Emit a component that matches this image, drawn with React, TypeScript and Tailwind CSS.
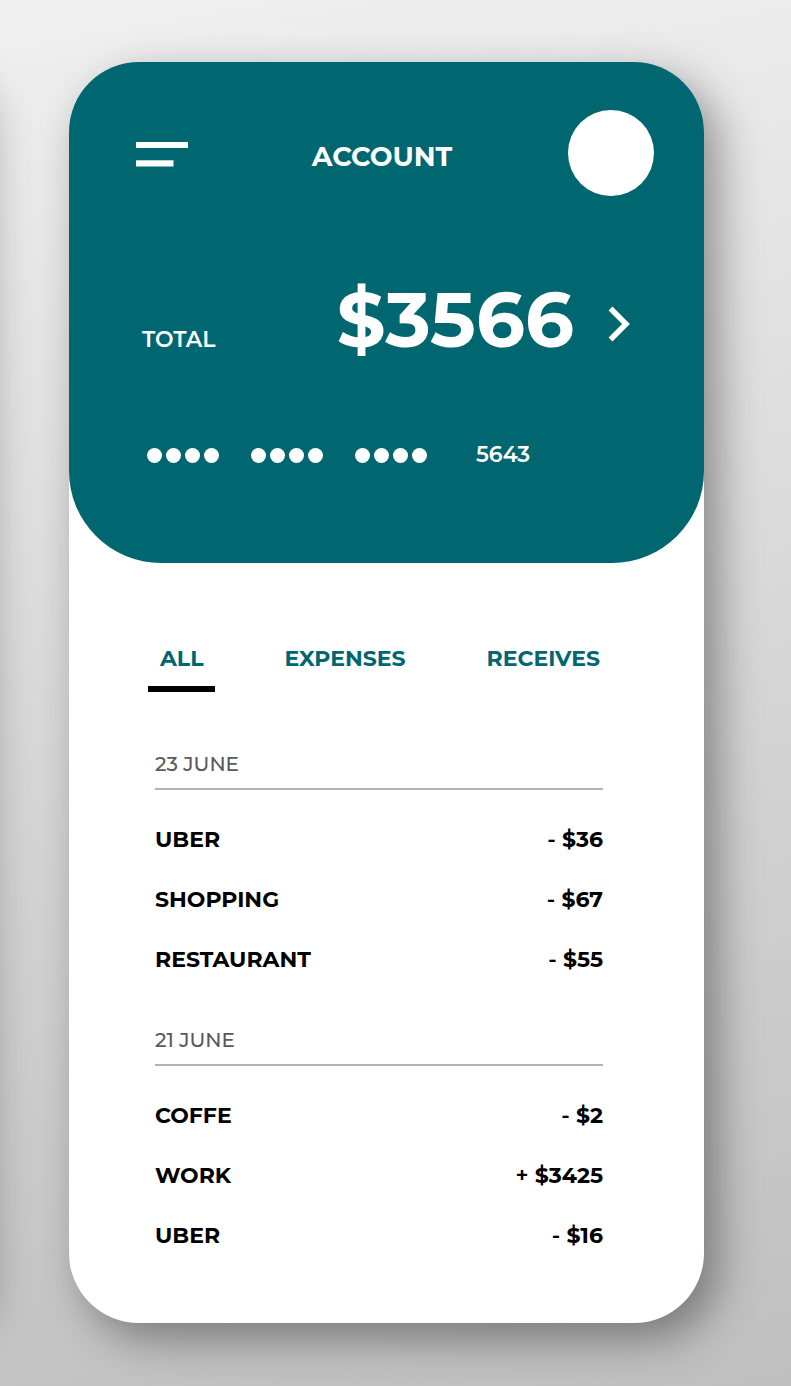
const groups = [
  {
    date: "23 JUNE",
    rows: [
      ["UBER", "-", "$36"],
      ["SHOPPING", "-", "$67"],
      ["RESTAURANT", "-", "$55"],
    ],
  },
  {
    date: "21 JUNE",
    rows: [
      ["COFFE", "-", "$2"],
      ["WORK", "+", "$3425"],
      ["UBER", "-", "$16"],
    ],
  },
];

const tabs = ["ALL", "EXPENSES", "RECEIVES"];

function MaskedDigits() {
  return (
    <span className="flex gap-1" aria-hidden="true">
      {[0, 1, 2, 3].map((i) => (
        <span key={i} className="size-[15px] rounded-full bg-white" />
      ))}
    </span>
  );
}

function AccountHeader() {
  return (
    <header className="rounded-t-[70px] rounded-b-[92px] bg-[#006670] pt-12 pr-[50px] pb-[92px] pl-[67px] text-white">
      <div className="flex items-center justify-between">
        <button type="button" aria-label="Menu" className="w-[60px] pt-0.5">
          <svg width="52" height="25" viewBox="0 0 52 25" fill="currentColor" className="block">
            <rect width="52" height="6" />
            <rect y="18.3" width="37.5" height="6.2" />
          </svg>
        </button>
        <h1 className="pt-2 text-[27px] leading-8 font-bold">ACCOUNT</h1>
        <button type="button" aria-label="Profile" className="size-[86px] rounded-full bg-white" />
      </div>

      <div className="mt-[78px] flex items-baseline justify-between pr-6 pl-1.5">
        <span className="text-[22px] font-semibold">TOTAL</span>
        <div className="flex items-center gap-[34px]">
          <strong className="text-[77px] leading-[90px] font-bold">$3566</strong>
          <button type="button" aria-label="Account details" className="pt-2.5">
            <svg width="22" height="36" viewBox="0 0 22 36" fill="none" stroke="currentColor" strokeWidth="5.5" className="block">
              <path d="M2.5 2.5 18 18 2.5 33.5" />
            </svg>
          </button>
        </div>
      </div>

      <div className="mt-[75px] flex items-center gap-8 pl-[11px]">
        <MaskedDigits />
        <MaskedDigits />
        <MaskedDigits />
        <span className="pl-[17px] text-[22px] leading-8 font-semibold">5643</span>
      </div>
    </header>
  );
}

export default function App() {
  return (
    <div className="relative min-h-screen overflow-hidden bg-linear-170 from-[#f0f0f0] to-[#bfbfbf] pt-[62px] pr-[87px] pb-[63px] pl-[69px] font-['Montserrat','Inter',sans-serif]">
      <div className="absolute top-[62px] bottom-[63px] -left-[124px] w-[100px] rounded-[70px] shadow-[10px_14px_44px_4px_rgba(0,0,0,0.3)]" />
      <main className="relative rounded-[70px] bg-white pb-[58px] shadow-[14px_16px_44px_0px_rgba(0,0,0,0.38)]">
        <AccountHeader />

        <nav className="mt-20 flex justify-between pr-[92px] pl-[79px]">
          {tabs.map((tab, i) => (
            <button
              key={tab}
              type="button"
              aria-pressed={i === 0}
              className={
                i === 0
                  ? "border-b-[6px] border-black px-3 pb-[11px] text-[22px] leading-8 font-bold text-[#006670]"
                  : "border-b-[6px] border-transparent px-3 pb-[11px] text-[22px] leading-8 font-bold text-[#006670]"
              }
            >
              {tab}
            </button>
          ))}
        </nav>

        <div className="mt-[47px] flex flex-col gap-[26px] pr-[101px] pl-[86px]">
          {groups.map((group) => (
            <section key={group.date}>
              <h2 className="mb-[19px] border-b-2 border-[#b3b3b3] pt-[9px] pb-2 text-xl leading-8 font-medium text-[#5a5a5a]">
                {group.date}
              </h2>
              <table aria-label={group.date} className="w-full text-[22px] font-bold text-black">
                <tbody>
                  {group.rows.map(([name, sign, amount]) => (
                    <tr key={name} className="h-15">
                      <th scope="row" className="p-0 text-left">{name}</th>
                      <td className="p-0 text-right">
                        <span className="font-semibold">{sign}</span> {amount}
                      </td>
                    </tr>
                  ))}
                </tbody>
              </table>
            </section>
          ))}
        </div>
      </main>
    </div>
  );
}
